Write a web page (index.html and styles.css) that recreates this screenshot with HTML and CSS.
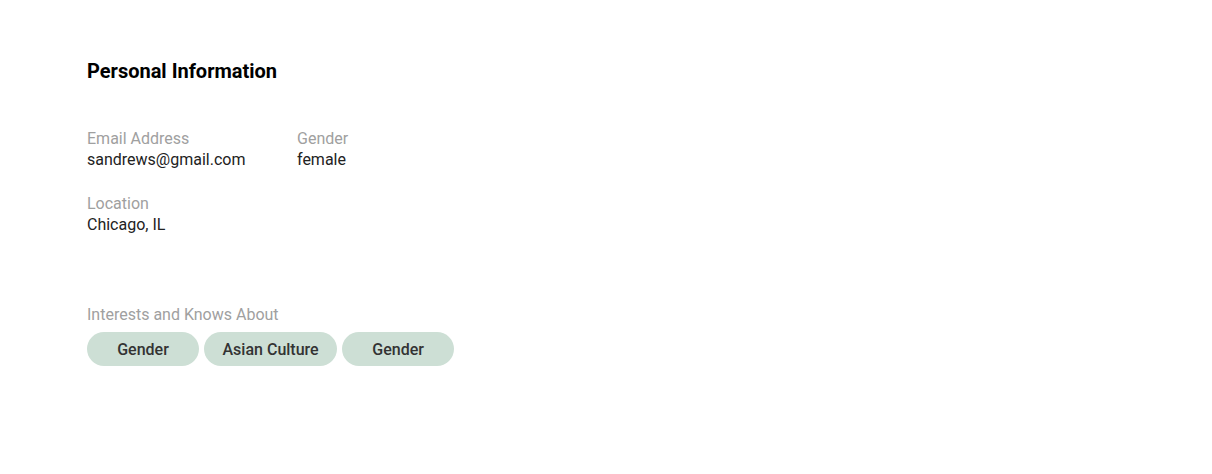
FILE: index.html
```html
<!DOCTYPE html>
<html>
<head>
<meta charset="utf-8">
<link rel="stylesheet" href="styles.css">
</head>
<body>
<main class="page">
  <h1 class="title">Personal Information</h1>
  <div class="fields">
    <div class="field">
      <div class="label">Email Address</div>
      <div class="value">sandrews@gmail.com</div>
    </div>
    <div class="field">
      <div class="label">Gender</div>
      <div class="value">female</div>
    </div>
    <div class="field">
      <div class="label">Location</div>
      <div class="value">Chicago, IL</div>
    </div>
  </div>
  <section class="interests">
    <div class="label">Interests and Knows About</div>
    <div class="chips">
      <span class="chip">Gender</span>
      <span class="chip">Asian Culture</span>
      <span class="chip">Gender</span>
    </div>
  </section>
</main>
</body>
</html>
```

FILE: styles.css
```css
html, body {
  margin: 0;
  padding: 0;
  background: #ffffff;
}
body {
  font-family: Roboto, "Liberation Sans", sans-serif;
  color: #212121;
}
.page {
  padding: 59px 87px 0;
}
.title {
  margin: 0;
  font-size: 20px;
  font-weight: 700;
  line-height: 24px;
  color: #000000;
}
.fields {
  margin-top: 45px;
  display: grid;
  grid-template-columns: 210px 210px;
  row-gap: 23px;
}
.label {
  font-size: 16px;
  line-height: 21px;
  color: #a0a0a0;
}
.value {
  font-size: 16px;
  line-height: 21px;
  color: #222222;
}
.interests {
  margin-top: 69px;
}
.chips {
  margin-top: 7px;
  display: flex;
  gap: 5px;
}
.chip {
  min-width: 112px;
  box-sizing: border-box;
  height: 34px;
  padding: 0 18.5px;
  border-radius: 17px;
  background: #cddfd5;
  display: inline-flex;
  align-items: center;
  justify-content: center;
  font-size: 16px;
  font-weight: 500;
  color: #333333;
}
```
